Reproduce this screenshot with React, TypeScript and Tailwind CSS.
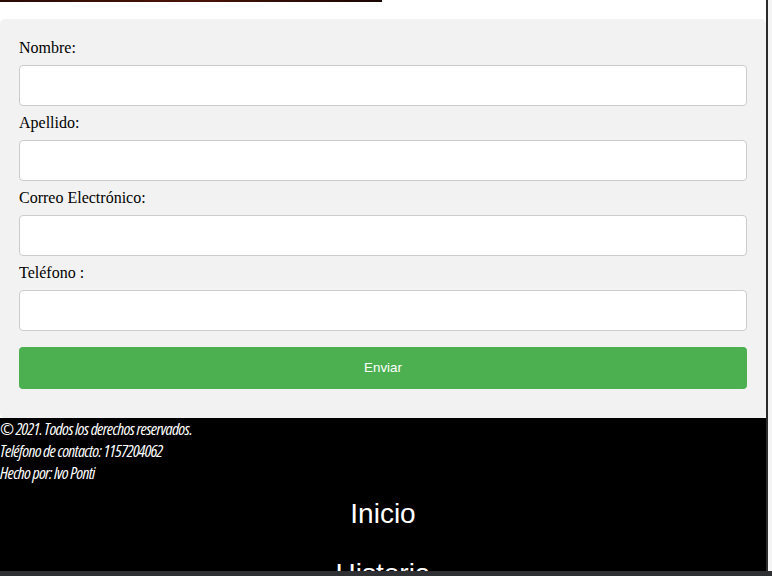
import React from "react";

const fields = ["Nombre:", "Apellido:", "Correo Electrónico:", "Teléfono :"];
const links = ["Inicio", "Historia"];

export default function App() {
  return (
    <div className="flex h-[576px] w-[772px] flex-col overflow-hidden bg-white">
      <div className="flex min-h-0 flex-1">
        <div className="w-[766px] shrink-0 overflow-hidden">
          {/* bottom edge of header image */}
          <div className="h-[2px] w-[382px] bg-gradient-to-r from-[#2a0a04] via-[#4a1408] to-[#1a0603]" />

          <form className="mt-[17px] rounded-[5px] bg-[#f2f2f2] px-[19px] pb-[29px] pt-[20px] font-['Liberation_Serif',serif]">
            {fields.map((f) => (
              <div key={f}>
                <label className="block text-[16px] leading-[18px] text-black">{f}</label>
                <input
                  type="text"
                  className="my-2 block h-[41px] w-full rounded-[4px] border border-[#ccc] bg-white px-5"
                />
              </div>
            ))}
            <button
              type="button"
              className="mt-[16px] block h-[42px] w-full rounded-[4px] bg-[#4caf50] font-['Liberation_Sans',sans-serif] text-[13.33px] text-white"
            >
              Enviar
            </button>
          </form>

          <footer className="bg-black text-white">
            <div className="font-['Open_Sans',sans-serif] text-[17px] italic leading-[22px] [font-stretch:75%] tracking-[-0.65px]">
              <p>© 2021. Todos los derechos reservados.</p>
              <p>Teléfono de contacto: 1157204062</p>
              <p>Hecho por: Ivo Ponti</p>
            </div>
            <ul className="mt-[14px] flex flex-col items-center gap-[28px] font-['Liberation_Sans',sans-serif] text-[28px] leading-[32px]">
              {links.map((l) => (
                <li key={l}>{l}</li>
              ))}
            </ul>
          </footer>
        </div>
        <div className="w-[2px] shrink-0 bg-[#2b2b2b]" />
        <div className="flex-1 bg-[#f4f4f4]" />
      </div>
      <div className="h-[5px] shrink-0 bg-[#2f3033]" />
    </div>
  );
}
